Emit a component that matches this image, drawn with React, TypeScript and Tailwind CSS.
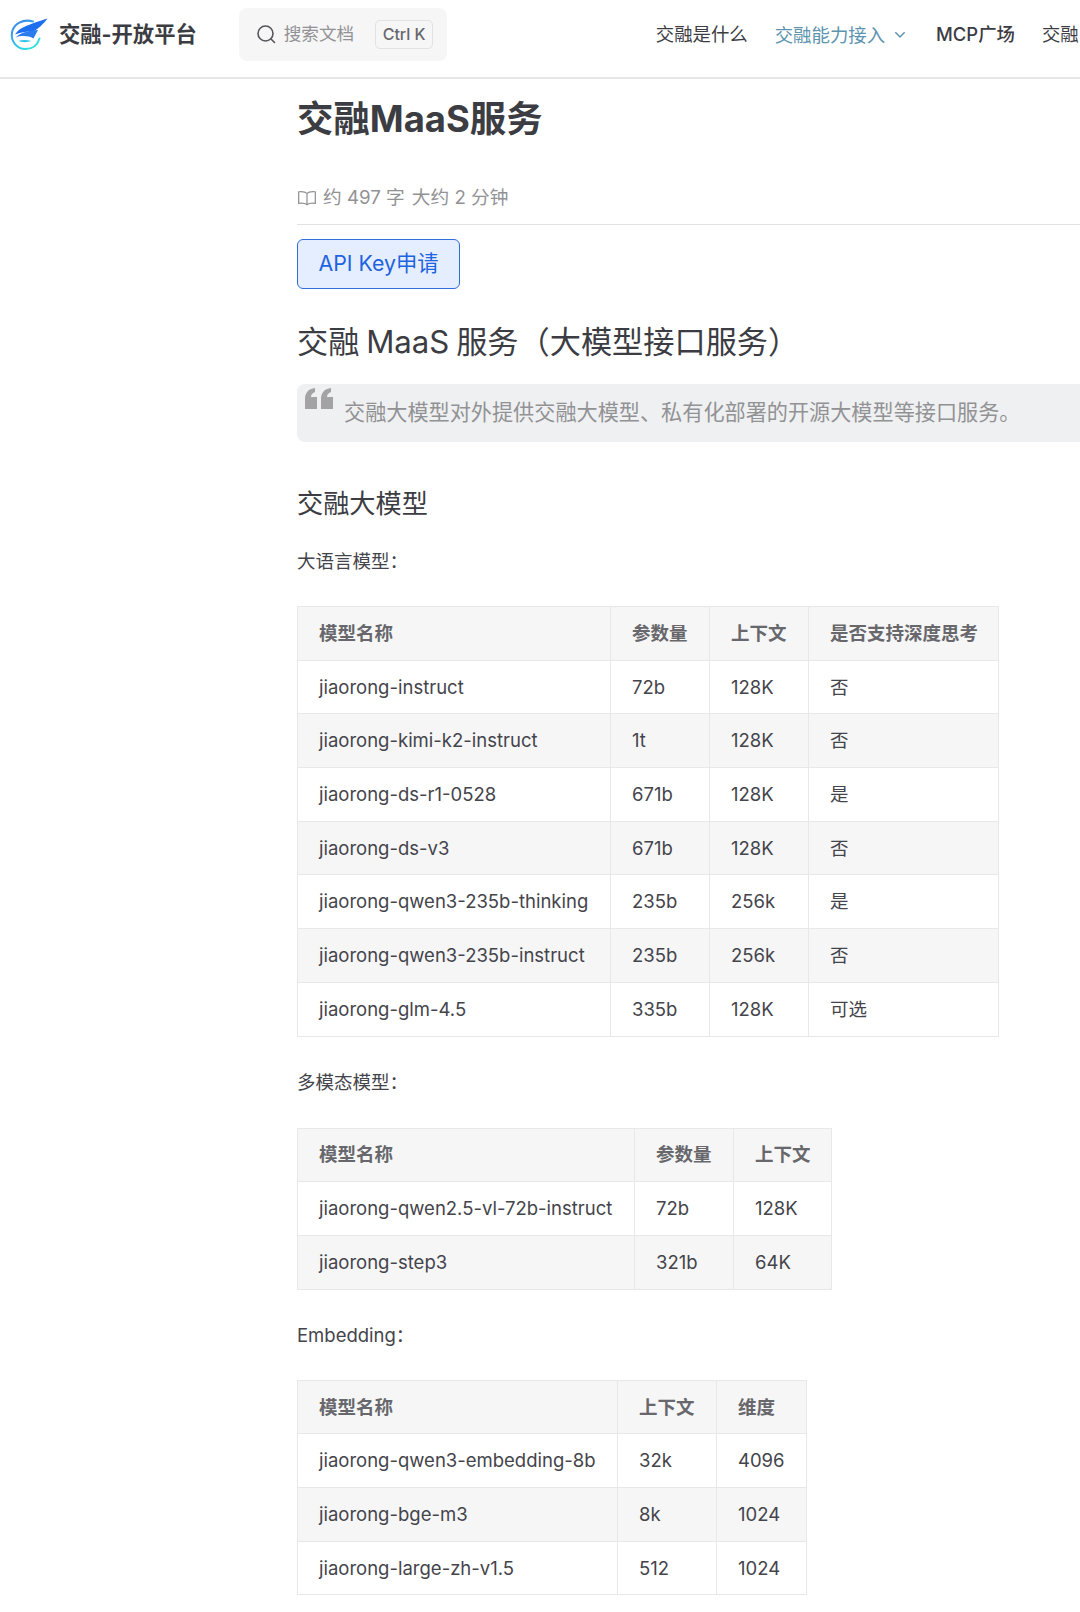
const font = { fontFamily: 'Inter, "Noto Sans CJK SC", sans-serif' };

type Table = { head: string[]; rows: string[][]; widths: number[] };

const t1: Table = {
  head: ["模型名称", "参数量", "上下文", "是否支持深度思考"],
  widths: [313, 99, 99, 190],
  rows: [
    ["jiaorong-instruct", "72b", "128K", "否"],
    ["jiaorong-kimi-k2-instruct", "1t", "128K", "否"],
    ["jiaorong-ds-r1-0528", "671b", "128K", "是"],
    ["jiaorong-ds-v3", "671b", "128K", "否"],
    ["jiaorong-qwen3-235b-thinking", "235b", "256k", "是"],
    ["jiaorong-qwen3-235b-instruct", "235b", "256k", "否"],
    ["jiaorong-glm-4.5", "335b", "128K", "可选"],
  ],
};
const t2: Table = {
  head: ["模型名称", "参数量", "上下文"],
  widths: [337, 99, 98],
  rows: [
    ["jiaorong-qwen2.5-vl-72b-instruct", "72b", "128K"],
    ["jiaorong-step3", "321b", "64K"],
  ],
};
const t3: Table = {
  head: ["模型名称", "上下文", "维度"],
  widths: [320, 99, 90],
  rows: [
    ["jiaorong-qwen3-embedding-8b", "32k", "4096"],
    ["jiaorong-bge-m3", "8k", "1024"],
    ["jiaorong-large-zh-v1.5", "512", "1024"],
  ],
};

function DataTable({ t }: { t: Table }) {
  return (
    <table className="border-collapse table-fixed text-[18.500px] text-[#44444b]" style={{ width: t.widths.reduce((a, b) => a + b, 0) }}>
      <colgroup>
        {t.widths.map((w, i) => (
          <col key={i} style={{ width: w }} />
        ))}
      </colgroup>
      <thead>
        <tr className="h-[53.700px] bg-[#f6f6f7]">
          {t.head.map((h) => (
            <th key={h} className="whitespace-nowrap border border-[#e8e8ea] px-[21px] pt-[1px] text-left font-semibold text-[#67676c]">
              {h}
            </th>
          ))}
        </tr>
      </thead>
      <tbody>
        {t.rows.map((r, i) => (
          <tr key={i} className={i % 2 === 1 ? "h-[53.700px] bg-[#f6f6f7]" : "h-[53.700px] bg-white"}>
            {r.map((c, j) => (
              <td key={j} className="whitespace-nowrap border border-[#e8e8ea] px-[21px] pt-[1px]">
                {c}
              </td>
            ))}
          </tr>
        ))}
      </tbody>
    </table>
  );
}

function Logo() {
  return (
    <svg width="40" height="36" viewBox="0 0 40 36" className="shrink-0">
      <defs>
        <linearGradient id="ring" x1="0" y1="0" x2="0.6" y2="1">
          <stop offset="0" stopColor="#3b82e8" />
          <stop offset="0.6" stopColor="#2fb8ee" />
          <stop offset="1" stopColor="#2fe0e0" />
        </linearGradient>
      </defs>
      <path d="M24 4.500C14 1.500 4.500 7 3 15.500c-1.500 9 5 16.500 13.500 16.500 7 0 12-4 14-10.500" fill="none" stroke="url(#ring)" strokeWidth="2" strokeLinecap="round" />
      <path d="M38.500 1.500C32 3.500 22 6.500 14 10.500 10 12.500 7.500 15 6 17.500 12 15 19 14.500 24 14.500 29 12 34.500 7 38.500 1.500Z" fill="#1d6ff0" />
      <path d="M29 13 24.500 21.500C19 18.500 12 18.500 6.500 20.500 11 16 19 13.500 29 13Z" fill="#2b7bf0" />
      <path d="M9 24c4-1.500 9-1.500 13.500 0-4.500 1.500-9.500 1.500-13.500 0Z" fill="#30c4ea" />
    </svg>
  );
}

export default function App() {
  return (
    <div className="w-[1080px] h-[1612px] overflow-hidden bg-white text-[#3c3c43]" style={font}>
      <header className="flex h-[79px] w-[1080px] items-center border-b-2 border-[#e6e6e8] bg-white pb-[7px] pl-[9px]">
        <Logo />
        <span className="ml-[10px] text-[21.300px] font-bold text-[#3c3c43]">交融-开放平台</span>
        <div className="mb-[2px] ml-[42px] flex h-[53px] w-[208px] items-center rounded-[8px] bg-[#f6f6f7] pl-[17px]">
          <svg width="20" height="20" viewBox="0 0 20 20" fill="none" stroke="#55555a" strokeWidth="1.600" strokeLinecap="round">
            <circle cx="9.500" cy="9.500" r="7.500" />
            <path d="m15 15 3.500 3.500" />
          </svg>
          <span className="ml-[8px] text-[17.600px] text-[#929295]">搜索文档</span>
          <span className="ml-[21px] flex h-[29px] w-[58px] items-center justify-center rounded-[5px] border border-[#e2e2e3] text-[16px] font-medium text-[#67676c]">
            Ctrl K
          </span>
        </div>
        <nav className="ml-[209px] flex items-center whitespace-nowrap text-[18.400px] text-[#3c3c43]">
          <span>交融是什么</span>
          <span className="ml-[27px] mt-[2px] text-[#5c93ad]">交融能力接入</span>
          <svg width="16" height="16" viewBox="0 0 24 24" fill="none" stroke="#5c93ad" strokeWidth="2.200" className="ml-[7px]">
            <path d="m5 8 7 7 7-7" />
          </svg>
          <span className="ml-[28px] font-medium">MCP广场</span>
          <span className="ml-[27px]">交融</span>
        </nav>
      </header>

      <main className="w-[1300px] pl-[297px]">
        <h1 className="mt-[15px] text-[36.400px] font-bold leading-[50px] text-[#3c3c43]">交融MaaS服务</h1>
        <div className="mt-[39px] flex h-[42px] w-[1003px] items-center justify-between border-b border-[#e2e2e3] pb-[10px] text-[18.700px] text-[#929295]">
          <div className="flex items-center">
            <svg width="20" height="20" viewBox="0 0 24 24" fill="none" stroke="#929295" strokeWidth="1.500" strokeLinejoin="round">
              <path d="M12 6.500C10 4.500 6 4 2 4.500v14c4-.5 8 0 10 1.500 2-1.500 6-2 10-1.500v-14c-4-.5-8 0-10 2ZM12 6.500V20" />
            </svg>
            <span className="ml-[6px]">约 497 字</span>
            <span className="ml-[7px]">大约 2 分钟</span>
          </div>
          <div className="mr-[-14px] h-[14px] w-[14px] rounded-[2px] border border-[#929295]" />
        </div>
        <button className="mt-[14px] flex h-[50px] w-[163px] items-center justify-center rounded-[6px] border border-[#2f6fdb] bg-[#e5eeff] text-[21.300px] font-normal text-[#1f63e0]">
          API Key申请
        </button>
        <h2 className="mt-[29px] text-[31.200px] leading-[48px] text-[#3c3c43] [word-spacing:-2px]">交融 MaaS 服务（大模型接口服务）</h2>
        <blockquote className="mt-[18px] flex h-[58px] w-[1000px] rounded-[8px] bg-[#eff0f1] pl-[8px] text-[#929295]">
          <svg width="28" height="21" viewBox="0 0 28 21" fill="#a3a3a6" className="mt-[4px] shrink-0">
            <path d="M0 21V11C0 5 3 1 10 0v4C7 5 6 7 6 9h6v12H0ZM16 21V11c0-6 3-10 10-11v4c-3 1-4 3-4 5h6v12H16Z" />
          </svg>
          <span className="ml-[11px] mt-[14px] text-[21.150px] leading-[30px]">交融大模型对外提供交融大模型、私有化部署的开源大模型等接口服务。</span>
        </blockquote>
        <h3 className="mt-[41px] text-[26.200px] leading-[42px] text-[#3c3c43]">交融大模型</h3>
        <p className="mt-[22px] text-[18.500px] leading-[28px] text-[#44444b]">大语言模型：</p>
        <div className="mt-[31px]">
          <DataTable t={t1} />
        </div>
        <p className="mt-[31px] text-[18.500px] leading-[28px] text-[#44444b]">多模态模型：</p>
        <div className="mt-[32px]">
          <DataTable t={t2} />
        </div>
        <p className="mt-[31px] text-[18.500px] leading-[28px] text-[#44444b]">Embedding：</p>
        <div className="mt-[31px]">
          <DataTable t={t3} />
        </div>
      </main>
    </div>
  );
}
